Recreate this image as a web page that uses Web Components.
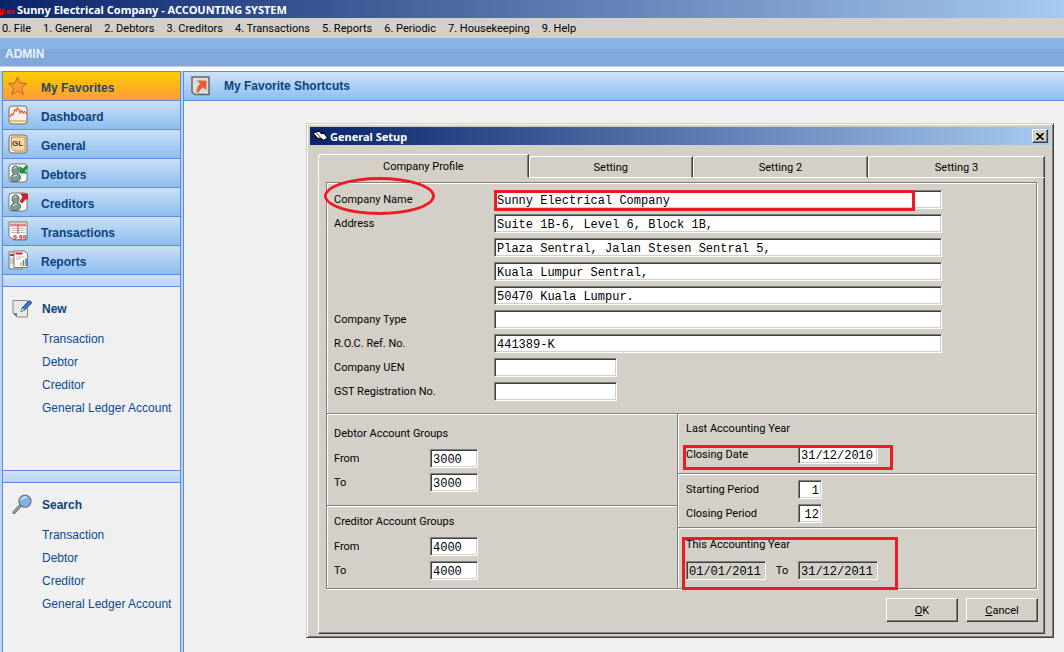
<!DOCTYPE html>
<html lang="en">
<head>
<meta charset="utf-8">
<title>Sunny Electrical Company - ACCOUNTING SYSTEM</title>
<style>
  html, body { margin: 0; }
  body {
    font-family: "Liberation Sans", Arial, sans-serif;
    font-size: 12px;
    background: #f0f0f0;
  }
</style>
</head>
<body>
<accounting-app></accounting-app>

<script>
"use strict";

// Icon drawings, each on a 20x20 canvas.
const ICONS = {
  star: `<path d="M9.5 1 12 7.2 18.5 7.5 13.5 12 15.2 18.5 9.5 15 3.8 18.5 5.5 12 .5 7.5 7 7.2Z" fill="#ff9a2e" stroke="#a8702a"/>`,
  dashboard: `<rect x="1" y="1" width="18" height="18" rx="3" fill="#f4f1ee" stroke="#6f6f6f"/>
    <path d="M1.5 12 4 9 5 10 7 4.5 8.5 6 9.5 3 11 4.5 12 8 13.5 5.5 15 8 16.5 6.5 18.5 9" fill="none" stroke="#f0592a" stroke-width="1.2"/>
    <path d="M2 16h16" stroke="#f5a742" stroke-width="1.5"/>`,
  general: `<rect x="1" y="1" width="18" height="18" rx="3" fill="#efe9df" stroke="#6f6f6f"/>
    <path d="M3.5 3h13.5v14H7l-3.5-3Z" fill="#fbd9a4" stroke="#c78a3c"/>
    <text x="4" y="12" font-family="Liberation Sans, Arial, sans-serif" font-weight="bold" font-size="8" fill="#333">GL</text>`,
  debtors: `<rect x="1" y="1" width="18" height="18" rx="3" fill="#fff" stroke="#777"/>
    <path d="M4 18.5C1.5 16 3 12 6 11 3 9 3.5 3 7.5 3S12 8 9.5 10.5C14 12 13 17 9.5 18.5Z" fill="#7d9c92" stroke="#48665c"/>
    <path d="M5.5 6q1-2 3-1.5M5 14q1-2 4-1.5" fill="none" stroke="#c5d6d0" stroke-width="1.2"/>
    <path d="M11.5 2.5v8h8l-2.5-2.5 3.5-4-2-2-4 3.5Z" fill="#18963c"/>`,
  creditors: `<rect x="1" y="1" width="18" height="18" rx="3" fill="#fff" stroke="#777"/>
    <path d="M4 18.5C1.5 16 3 12 6 11 3 9 3.5 3 7.5 3S12 8 9.5 10.5C14 12 13 17 9.5 18.5Z" fill="#7d9c92" stroke="#48665c"/>
    <path d="M5.5 6q1-2 3-1.5M5 14q1-2 4-1.5" fill="none" stroke="#c5d6d0" stroke-width="1.2"/>
    <path d="M12 1.5h8.5V9l-2.5-2-4 4.5-2.5-2 3-4.5Z" fill="#d21f2b"/>`,
  transactions: `<path d="M1 1h18v18H6l-5-4Z" fill="#fff" stroke="#777"/>
    <path d="M2 4h16" stroke="#e0868a" stroke-width="3"/><path d="M3 7.5h14M3 9.5h14M3 11.5h14" stroke="#bbb"/>
    <path d="M10 4v9" stroke="#d43a3a"/>
    <text x="5" y="19" font-family="Liberation Sans, Arial, sans-serif" font-weight="bold" font-size="7" fill="#d21f2b">9.99</text>`,
  reports: `<path d="M1 2h13v17H1Z" fill="#eee" stroke="#777"/><path d="M2 5h5" stroke="#d21f2b" stroke-width="2"/>
    <path d="M2 9h4M2 11h4M2 13h4" stroke="#aaa"/>
    <path d="M6 1h10l3.5 3v13.5H6Z" fill="#fff" stroke="#777"/><path d="M7.5 3.5h7" stroke="#d21f2b" stroke-width="2"/>
    <path d="M8 7h9M8 9h5" stroke="#bbb"/><path d="M13 16v-4" stroke="#f5a742" stroke-width="1.5"/><path d="M15.5 16v-6" stroke="#3c9e55" stroke-width="1.5"/><path d="M18 16V8.5" stroke="#3a74c8" stroke-width="1.5"/>`,
  shortcut: `<path d="M1 1h17v17.5H4L1 16Z" fill="#dcdcdc" stroke="#666" stroke-width="1.5"/>
    <path d="M5.5 4.5H15.5V14.5L12.5 11.5Q8.5 13 8 16.5H5.5Q5.5 11 9 7.5Z" fill="#f0592a" stroke="#b8b8b8" stroke-width=".5"/>`,
  note: `<path d="M1 2.5h14.5V19H5l-4-4Z" fill="#e9e9e9" stroke="#888"/><path d="M1 15h4v4Z" fill="#777"/>
    <path d="M9 13.5 10 10 17.5 2.5l2.3 2.3L12.5 12Z" fill="#3f78d0" stroke="#1d3f80"/><path d="m9 13.5 1-3.5 2.5 2Z" fill="#ddd"/>`,
  search: `<path d="M2 18.5 8 12" stroke="#666" stroke-width="3" stroke-linecap="round"/><path d="M2 18.5 8 12" stroke="#ddd" stroke-linecap="round"/>
    <circle cx="13" cy="7.2" r="6" fill="#7fb2ea" stroke="#777" stroke-width="1.3"/><path d="M9 6q2-3.5 6-2.5" stroke="#d8e9fb" stroke-width="1.5" fill="none"/>`,
  book: `<path d="M1 6 9 4l3 3 3-.5 4.5 6-5 3-4-3-3.5.5Z" fill="#fff" stroke="#000" stroke-width="1.3"/><path d="m5 5.5 5.5 6" stroke="#000" fill="none"/>`
};

// Attach an open shadow root and fill it.
function render(el, html) {
  el.attachShadow({ mode: "open" }).innerHTML = html;
}

// <app-icon name="star">
class AppIcon extends HTMLElement {
  connectedCallback() {
    render(this, `
      <style>
        :host { display: block; flex: none; width: 20px; height: 20px; }
        svg { display: block; width: 100%; height: 100%; }
      </style>
      <svg viewBox="0 0 20 20" aria-hidden="true">${ICONS[this.getAttribute("name")]}</svg>
    `);
  }
}

// Main window caption and the menu under it.
class AppHeader extends HTMLElement {
  connectedCallback() {
    const menus = ["0. File", "1. General", "2. Debtors", "3. Creditors", "4. Transactions",
      "5. Reports", "6. Periodic", "7. Housekeeping", "9. Help"];
    render(this, `
      <style>
        :host { display: block; font-family: Roboto, Tahoma, sans-serif; font-size: 11px; }
        .caption {
          display: flex; align-items: center; gap: 2px; height: 18px;
          background: linear-gradient(90deg, #0a246a, #a6caf0);
          color: #fff; font-family: "Noto Sans", Tahoma, sans-serif; font-weight: bold; white-space: nowrap;
        }
        svg { width: 15px; height: 18px; }
        nav { display: flex; align-items: center; gap: 12px; height: 20px; padding: 0 2px; background: #d4d0c8; }
        button { padding: 0; border: 0; background: none; font: inherit; color: #000; white-space: nowrap; }
        .user {
          display: flex; align-items: center; height: 29px; padding: 3px 5px 0; box-sizing: border-box;
          background: linear-gradient(#89b4e8 11px, #82a8dc 11px);
          font-family: "Liberation Sans", Arial, sans-serif; font-size: 12px; font-weight: bold; color: #eef4fc;
          border-bottom: 1px solid #b8d0ee;
        }
      </style>
      <div class="caption">
        <svg viewBox="0 0 15 18" aria-hidden="true">
          <path d="M0 8h1v4h1V9h2v6H2l-1 1H0Z" fill="#e00"/>
          <text x="4" y="14" font-family="Liberation Sans, Arial, sans-serif" font-size="5" font-weight="bold" fill="#f00">UBS</text>
        </svg>
        <span>Sunny Electrical Company - ACCOUNTING SYSTEM</span>
      </div>
      <nav>${menus.map(m => `<button type="button">${m}</button>`).join("")}</nav>
      <div class="user">ADMIN</div>
    `);
  }
}

// One bar of the outlook style side menu.
class NavItem extends HTMLElement {
  connectedCallback() {
    render(this, `
      <style>
        :host { display: block; }
        a {
          display: flex; align-items: center; gap: 13px; height: 28px; padding-left: 5px;
          border-top: 1px solid #5f8bdc;
          background: linear-gradient(#cbdff5, #8dbef0);
          color: #0b437f; font-weight: bold; text-decoration: none;
        }
        span { padding-top: 3px; }
        :host([selected]) a { background: linear-gradient(#ffcb05, #ff9c35); color: #284a5c; }
      </style>
      <a href="#"><app-icon name="${this.getAttribute("icon")}"></app-icon><span><slot></slot></span></a>
    `);
  }
}

// Titled list of links in the side panel.
class SideSection extends HTMLElement {
  connectedCallback() {
    render(this, `
      <style>
        :host { display: block; min-height: 196px; }
        .band { height: 11px; border: solid #5f8bdc; border-width: 1px 0; background: linear-gradient(#cfe1f6, #b9d4f3); }
        h2 {
          display: flex; align-items: center; gap: 10px; height: 41px; margin: 0; padding-left: 9px;
          font-size: 12px; color: #0b437f;
        }
        h2 span { padding-top: 3px; }
        nav { display: flex; flex-direction: column; padding-left: 39px; line-height: 23px; }
      </style>
      <div class="band"></div>
      <h2><app-icon name="${this.getAttribute("icon")}"></app-icon><span>${this.getAttribute("heading")}</span></h2>
      <nav><slot></slot></nav>
    `);
  }
}

class SidePanel extends HTMLElement {
  connectedCallback() {
    render(this, `
      <style>
        :host {
          display: flex; width: 184px; flex: none; box-sizing: border-box; padding: 0 2px;
          background: #b8d4f4; border-right: 1px solid #5f8bdc;
        }
        .inner {
          display: flex; flex-direction: column; flex: 1;
          border: solid #5f8bdc; border-width: 0 1px; background: #f0f0f0;
        }
        side-section:last-child { flex: 1; min-height: 0; }
        a { color: #0b4a92; text-decoration: none; white-space: nowrap; }
      </style>
      <div class="inner">
        <nav-item icon="star" selected>My Favorites</nav-item>
        <nav-item icon="dashboard">Dashboard</nav-item>
        <nav-item icon="general">General</nav-item>
        <nav-item icon="debtors">Debtors</nav-item>
        <nav-item icon="creditors">Creditors</nav-item>
        <nav-item icon="transactions">Transactions</nav-item>
        <nav-item icon="reports">Reports</nav-item>
        <side-section icon="note" heading="New">
          <a href="#">Transaction</a><a href="#">Debtor</a><a href="#">Creditor</a><a href="#">General Ledger Account</a>
        </side-section>
        <side-section icon="search" heading="Search">
          <a href="#">Transaction</a><a href="#">Debtor</a><a href="#">Creditor</a><a href="#">General Ledger Account</a>
        </side-section>
      </div>
    `);
  }
}

// Label and sunken text box. Without |label| the |name| is only announced.
class FormField extends HTMLElement {
  connectedCallback() {
    const label = this.getAttribute("label");
    const name = this.getAttribute("name") || label;
    render(this, `
      <style>
        :host { display: flex; align-items: center; height: 19px; }
        label { flex: none; width: var(--label-width, 160px); text-align: var(--label-align, left); white-space: nowrap; }
        input {
          box-sizing: border-box; width: var(--field-width, 448px); min-width: 0; height: 19px; margin: 0; padding: 2px 2px 0;
          border: 1px solid; border-color: #808080 #fff #fff #808080; border-radius: 0;
          box-shadow: inset 1px 1px 0 #404040, inset -1px -1px 0 #d4d0c8;
          background: #fff; color: #000; outline: none;
          font: 12px "Liberation Mono", "Courier New", monospace;
          text-align: var(--field-align, left);
        }
        input[readonly] { background: #d4d0c8; }
      </style>
      ${label === null ? "" : `<label for="box">${label}</label>`}
      <input id="box" type="text" aria-label="${name}" value="${this.getAttribute("value") || ""}" ${this.hasAttribute("readonly") ? "readonly" : ""}>
    `);
  }
}

// Etched frame round a set of fields. Neighbours share an edge.
class FieldGroup extends HTMLElement {
  connectedCallback() {
    const heading = this.getAttribute("heading");
    render(this, `
      <style>
        :host {
          display: flex; flex-direction: column; gap: 5px; position: relative; padding: 7px;
          border: 1px solid #808080; box-shadow: 1px 1px 0 #fff, inset 1px 1px 0 #fff;
        }
        h3 { margin: 0; font-size: inherit; font-weight: normal; line-height: var(--heading-height, 20px); }
      </style>
      ${heading ? `<h3>${heading}</h3>` : ""}
      <slot></slot>
    `);
  }
}

// Red outline drawn over a group.
class RedMark extends HTMLElement {
  connectedCallback() {
    render(this, `
      <style>
        :host { display: block; position: absolute; box-sizing: border-box; border: 3px solid #ed1c24; pointer-events: none; }
        :host([round]) { border-radius: 50%; }
      </style>
    `);
  }
}

class ClassicButton extends HTMLElement {
  connectedCallback() {
    render(this, `
      <style>
        :host { display: block; }
        button {
          display: block; width: 72px; height: 24px; padding: 0; border: 1px solid; border-color: #fff #404040 #404040 #fff;
          box-shadow: inset -1px -1px 0 #808080; background: #d4d0c8; color: #000; font: inherit; border-radius: 0;
        }
      </style>
      <button type="button"><slot></slot></button>
    `);
  }
}

class SetupTabs extends HTMLElement {
  connectedCallback() {
    render(this, `
      <style>
        :host { display: block; }
        .tabs { display: flex; align-items: flex-end; height: 24px; }
        button {
          height: 22px; min-width: 0; padding: 0; border: 1px solid; border-color: #fff #404040 #fff #fff;
          border-radius: 3px 0 0 0; box-shadow: inset -1px 0 0 #808080;
          background: #d4d0c8; color: #000; font: inherit;
        }
        button[aria-selected=true] { height: 24px; border-bottom-color: #d4d0c8; }
        .t1 { flex: 211; }
        .t2 { flex: 164; }
        .t3 { flex: 175; }
        .t4 { flex: 177; }
        .page {
          padding: 4px 6px 11px 7px; border: 1px solid; border-color: transparent #404040 #404040 #fff;
          border-top: 0; box-shadow: inset -1px -1px 0 #808080;
        }
      </style>
      <div class="tabs" role="tablist">
        <button class="t1" type="button" role="tab" aria-selected="true">Company Profile</button>
        <button class="t2" type="button" role="tab">Setting</button>
        <button class="t3" type="button" role="tab">Setting 2</button>
        <button class="t4" type="button" role="tab">Setting 3</button>
      </div>
      <div class="page" role="tabpanel"><slot></slot></div>
    `);
  }
}

class SetupWindow extends HTMLElement {
  connectedCallback() {
    render(this, `
      <style>
        :host {
          display: block; padding: 2px; background: #d4d0c8; color: #000;
          border: 1px solid; border-color: #d4d0c8 #404040 #404040 #d4d0c8;
          box-shadow: inset 1px 1px 0 #fff, inset -1px -1px 0 #808080;
          font-family: Roboto, "MS Sans Serif", sans-serif; font-size: 11px;
        }
        header {
          display: flex; align-items: center; gap: 2px; height: 18px; padding: 0 2px; margin: 1px 1px 9px;
          background: linear-gradient(90deg, #0a246a, #a6caf0);
        }
        header app-icon { width: 16px; height: 16px; }
        h1 { flex: 1; margin: 0; font: bold 11px "Noto Sans", Tahoma, sans-serif; color: #fff; }
        .close {
          display: flex; align-items: center; justify-content: center; width: 16px; height: 14px; padding: 0;
          border: 1px solid; border-color: #fff #404040 #404040 #fff; box-shadow: inset -1px -1px 0 #808080; background: #d4d0c8;
        }
        setup-tabs { margin: 0 6px 1px 9px; }
        .sheet { display: grid; grid-template-columns: 352fr 359fr; margin-right: 1px; }
        .company { grid-column: 1 / 3; padding-bottom: 12px; }
        .column { display: flex; flex-direction: column; margin-top: -1px; }
        .column + .column { margin-left: -1px; }
        .column field-group + field-group { margin-top: -1px; }
        .short { --field-width: 123px; }
        .accounts { --label-width: 96px; --field-width: 48px; }
        .debtor { padding-top: 10px; padding-bottom: 13px; }
        .creditor { flex: 1; padding-top: 6px; }
        .years field-group { padding: 6px 8px 8px; --label-width: 112px; --field-width: 80px; --heading-height: 22px; }
        .years .last { padding-top: 4px; padding-bottom: 9px; }
        .years .periods { padding-bottom: 4px; --field-width: 24px; --field-align: right; }
        .range { display: flex; }
        .range .to { --label-width: 32px; --label-align: center; }
        .mark-name { left: -3px; top: -6px; width: 111px; height: 38px; }
        .mark-box { left: 167px; top: 7px; width: 421px; height: 21px; }
        .mark-closing { left: 5px; top: 31px; width: 210px; height: 25px; }
        .mark-year { left: 4px; top: 9px; width: 216px; height: 53px; }
        footer { display: flex; justify-content: flex-end; gap: 8px; margin-top: 9px; }
      </style>
      <header>
        <app-icon name="book"></app-icon>
        <h1>General Setup</h1>
        <button class="close" type="button" aria-label="Close">
          <svg width="8" height="7" viewBox="0 0 8 7" aria-hidden="true"><path d="m.5 0 7 7m0-7-7 7" stroke="#000" stroke-width="1.6"/></svg>
        </button>
      </header>
      <setup-tabs>
        <div class="sheet">
          <field-group class="company">
            <form-field label="Company Name" value="Sunny Electrical Company"></form-field>
            <form-field label="Address" value="Suite 1B-6, Level 6, Block 1B,"></form-field>
            <form-field label="" name="Address line 2" value="Plaza Sentral, Jalan Stesen Sentral 5,"></form-field>
            <form-field label="" name="Address line 3" value="Kuala Lumpur Sentral,"></form-field>
            <form-field label="" name="Address line 4" value="50470 Kuala Lumpur."></form-field>
            <form-field label="Company Type"></form-field>
            <form-field label="R.O.C. Ref. No." value="441389-K"></form-field>
            <form-field class="short" label="Company UEN"></form-field>
            <form-field class="short" label="GST Registration No."></form-field>
            <red-mark class="mark-name" round></red-mark>
            <red-mark class="mark-box"></red-mark>
          </field-group>
          <div class="column accounts">
            <field-group class="debtor" heading="Debtor Account Groups">
              <form-field label="From" value="3000"></form-field>
              <form-field label="To" value="3000"></form-field>
            </field-group>
            <field-group class="creditor" heading="Creditor Account Groups">
              <form-field label="From" value="4000"></form-field>
              <form-field label="To" value="4000"></form-field>
            </field-group>
          </div>
          <div class="column years">
            <field-group class="last" heading="Last Accounting Year">
              <form-field label="Closing Date" value="31/12/2010"></form-field>
              <red-mark class="mark-closing"></red-mark>
            </field-group>
            <field-group class="periods">
              <form-field label="Starting Period" value="1"></form-field>
              <form-field label="Closing Period" value="12"></form-field>
            </field-group>
            <field-group heading="This Accounting Year">
              <div class="range">
                <form-field name="From" value="01/01/2011" readonly></form-field>
                <form-field class="to" label="To" value="31/12/2011" readonly></form-field>
              </div>
              <red-mark class="mark-year"></red-mark>
            </field-group>
          </div>
        </div>
        <footer>
          <classic-button><u>O</u>K</classic-button>
          <classic-button><u>C</u>ancel</classic-button>
        </footer>
      </setup-tabs>
    `);
  }
}

class AccountingApp extends HTMLElement {
  connectedCallback() {
    render(this, `
      <style>
        :host { display: flex; flex-direction: column; min-height: 100vh; }
        .body { display: flex; flex: 1; margin-top: 4px; box-shadow: 0 -4px 0 #fff; }
        main { flex: 1; min-width: 0; display: flex; flex-direction: column; }
        .bar {
          display: flex; align-items: center; gap: 13px; height: 28px; padding-left: 7px;
          border: solid #5f8bdc; border-width: 1px 0; background: linear-gradient(#cfe2f6, #8bbdf0);
        }
        .bar h2 { margin: 0; font-size: 12px; color: #0b437f; }
        .desktop { position: relative; flex: 1; }
        setup-window { position: absolute; left: 122px; right: 10px; top: 22px; }
      </style>
      <app-header></app-header>
      <div class="body">
        <side-panel></side-panel>
        <main>
          <div class="bar"><app-icon name="shortcut"></app-icon><h2>My Favorite Shortcuts</h2></div>
          <div class="desktop"><setup-window></setup-window></div>
        </main>
      </div>
    `);
  }
}

customElements.define("app-icon", AppIcon);
customElements.define("app-header", AppHeader);
customElements.define("nav-item", NavItem);
customElements.define("side-section", SideSection);
customElements.define("side-panel", SidePanel);
customElements.define("form-field", FormField);
customElements.define("field-group", FieldGroup);
customElements.define("red-mark", RedMark);
customElements.define("classic-button", ClassicButton);
customElements.define("setup-tabs", SetupTabs);
customElements.define("setup-window", SetupWindow);
customElements.define("accounting-app", AccountingApp);
</script>
</body>
</html>
